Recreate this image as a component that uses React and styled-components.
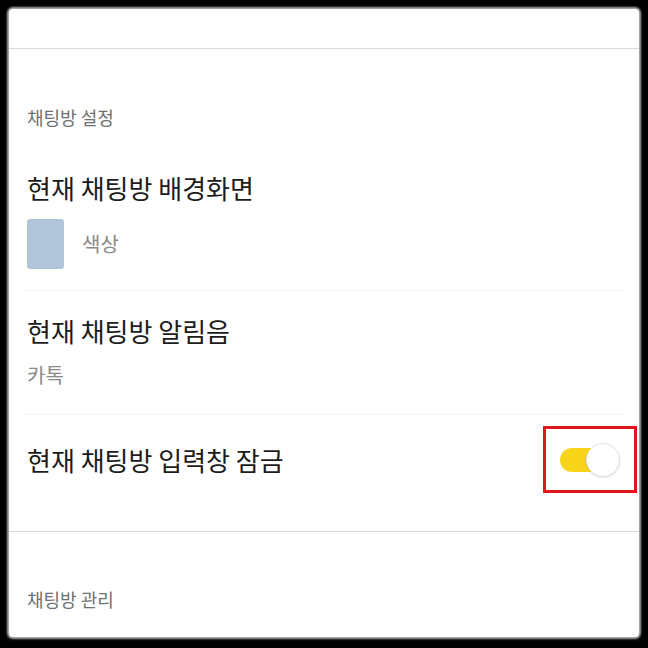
import React from "react";
import styled, { createGlobalStyle } from "styled-components";

const Global = createGlobalStyle`
  html, body { margin: 0; padding: 0; background: #000; }
  body { font-family: "Noto Sans CJK KR", "Noto Sans", sans-serif; }
  * { box-sizing: border-box; }
`;

const Frame = styled.div`
  width: 648px;
  height: 648px;
  padding: 9px 9px 11px 9px;
  background: #000;
`;

const Card = styled.div`
  position: relative;
  width: 100%;
  height: 100%;
  background: #fff;
  border-radius: 4px;
  box-shadow: 0 0 2px 2px rgba(200, 200, 200, 0.85);
  display: flex;
  flex-direction: column;
`;

const TopBar = styled.div`
  height: 40px;
  flex-shrink: 0;
  border-bottom: 1px solid #dcdcdc;
`;

const SectionHeader = styled.div`
  padding: ${(p) => p.$pt}px 18px 0 18px;
  height: ${(p) => p.$h}px;
  font-size: 18px;
  line-height: 22px;
  color: #707070;
  flex-shrink: 0;
`;

const List = styled.div`
  padding: 0 15px;
  display: flex;
  flex-direction: column;
`;

const Row = styled.div`
  position: relative;
  display: flex;
  flex-direction: ${(p) => (p.$inline ? "row" : "column")};
  align-items: ${(p) => (p.$inline ? "center" : "stretch")};
  justify-content: space-between;
  padding: ${(p) => p.$pt}px 4px ${(p) => p.$pb}px 3px;
  border-bottom: ${(p) => (p.$last ? "none" : "1px solid #f3f3f3")};
`;

const Title = styled.div`
  font-size: 26px;
  line-height: 30px;
  color: #1c1c1c;
`;

const Sub = styled.div`
  font-size: 20px;
  line-height: 24px;
  color: #8a8a8a;
  margin-top: ${(p) => p.$mt}px;
`;

const SwatchLine = styled.div`
  display: flex;
  align-items: center;
  gap: 18px;
  margin-top: 16px;
`;

const Swatch = styled.div`
  width: 37px;
  height: 50px;
  border-radius: 3px;
  background: #b2c6da;
`;

const SwatchLabel = styled.span`
  font-size: 20px;
  line-height: 24px;
  color: #8a8a8a;
`;

const Toggle = styled.div`
  position: relative;
  width: 60px;
  height: 34px;
  flex-shrink: 0;
`;

const Track = styled.div`
  position: absolute;
  left: 0;
  top: 5px;
  width: 46px;
  height: 24px;
  border-radius: 12px;
  background: #f8d41a;
`;

const Knob = styled.div`
  position: absolute;
  right: 0;
  top: 0;
  width: 34px;
  height: 34px;
  border-radius: 50%;
  background: #fff;
  border: 1px solid #e2e2e2;
  box-shadow: 0 1px 2px rgba(0, 0, 0, 0.12);
`;

const Highlight = styled.div`
  position: absolute;
  inset: -17px -17px -16px -17px;
  border: 3px solid #e0161f;
  pointer-events: none;
`;

const Divider = styled.div`
  height: 1px;
  background: #dcdcdc;
  flex-shrink: 0;
`;

export default function App() {
  return (
    <>
      <Global />
      <Frame>
        <Card>
          <TopBar />
          <SectionHeader $pt={57} $h={99}>채팅방 설정</SectionHeader>
          <List>
            <Row $pt={25} $pb={21}>
              <Title>현재 채팅방 배경화면</Title>
              <SwatchLine>
                <Swatch />
                <SwatchLabel>색상</SwatchLabel>
              </SwatchLine>
            </Row>
            <Row $pt={25} $pb={27}>
              <Title>현재 채팅방 알림음</Title>
              <Sub $mt={17}>카톡</Sub>
            </Row>
            <Row $inline $last $pt={28} $pb={54}>
              <Title>현재 채팅방 입력창 잠금</Title>
              <Toggle>
                <Track />
                <Knob />
                <Highlight />
              </Toggle>
            </Row>
          </List>
          <Divider />
          <SectionHeader $pt={56} $h={80}>채팅방 관리</SectionHeader>
        </Card>
      </Frame>
    </>
  );
}
